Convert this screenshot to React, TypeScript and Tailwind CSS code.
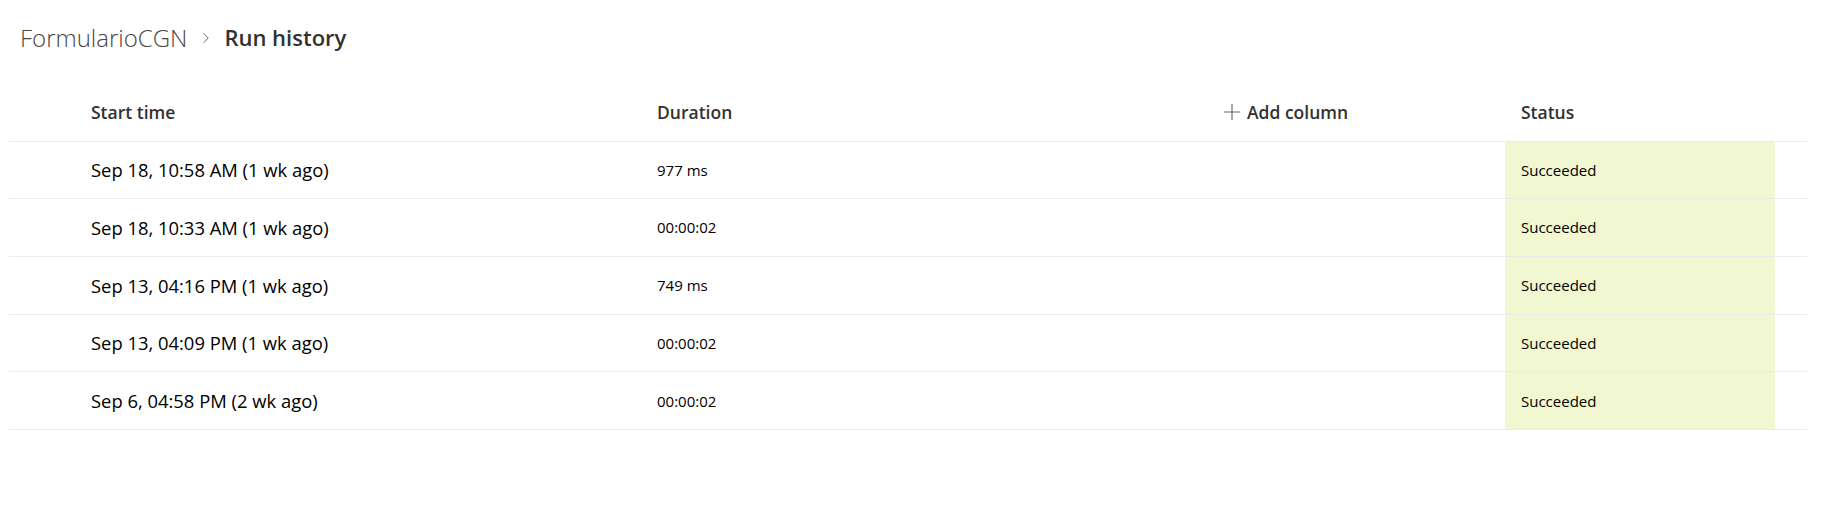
import React from 'react';
import { ChevronRight } from 'lucide-react';

interface Run {
  start: string;
  duration: string;
  status: string;
}

const runs: Run[] = [
  { start: 'Sep 18, 10:58 AM (1 wk ago)', duration: '977 ms', status: 'Succeeded' },
  { start: 'Sep 18, 10:33 AM (1 wk ago)', duration: '00:00:02', status: 'Succeeded' },
  { start: 'Sep 13, 04:16 PM (1 wk ago)', duration: '749 ms', status: 'Succeeded' },
  { start: 'Sep 13, 04:09 PM (1 wk ago)', duration: '00:00:02', status: 'Succeeded' },
  { start: 'Sep 6, 04:58 PM (2 wk ago)', duration: '00:00:02', status: 'Succeeded' }
];

const cols = 'grid grid-cols-[82px_566px_552px_296px_270px_32px]';

const App: React.FC = () => {
  return (
    <div className="min-h-screen w-full bg-white font-['Open_Sans',sans-serif]">
      <div className="flex h-[75px] items-center pl-[20px]">
        <span className="text-[24px] font-[350] text-[#484644]">FormularioCGN</span>
        <ChevronRight className="ml-[10px] mr-[9px] h-[18px] w-[18px] text-[#605e5c]" strokeWidth={1.2} />
        <span className="text-[22px] font-semibold text-[#323130]">Run history</span>
      </div>

      <div className="ml-[9px] w-[1798px]">
        <div className={`${cols} mt-[9px] h-[57.7px] items-center border-b border-[#edebe9] text-[17.5px] font-semibold text-[#323130]`}>
          <div />
          <div>Start time</div>
          <div>Duration</div>
          <div className="flex items-center pl-[15px]">
            <svg width="16" height="16" viewBox="0 0 16 16" className="mr-[7px] text-[#605e5c]">
              <path d="M8 0v16M0 8h16" stroke="currentColor" strokeWidth="1.1" fill="none" />
            </svg>
            <span>Add column</span>
          </div>
          <div className="pl-[16px]">Status</div>
          <div />
        </div>

        {runs.map((run, i) => (
          <div key={i} className={`${cols} h-[57.7px] border-b border-[#edebe9] text-black`}>
            <div />
            <div className="flex items-center text-[18.4px]">{run.start}</div>
            <div className="flex items-center text-[15px]">{run.duration}</div>
            <div />
            <div className="flex items-center bg-[#f1f7d1] pl-[16px] text-[15px]">{run.status}</div>
            <div />
          </div>
        ))}
      </div>
    </div>
  );
};

export default App;
